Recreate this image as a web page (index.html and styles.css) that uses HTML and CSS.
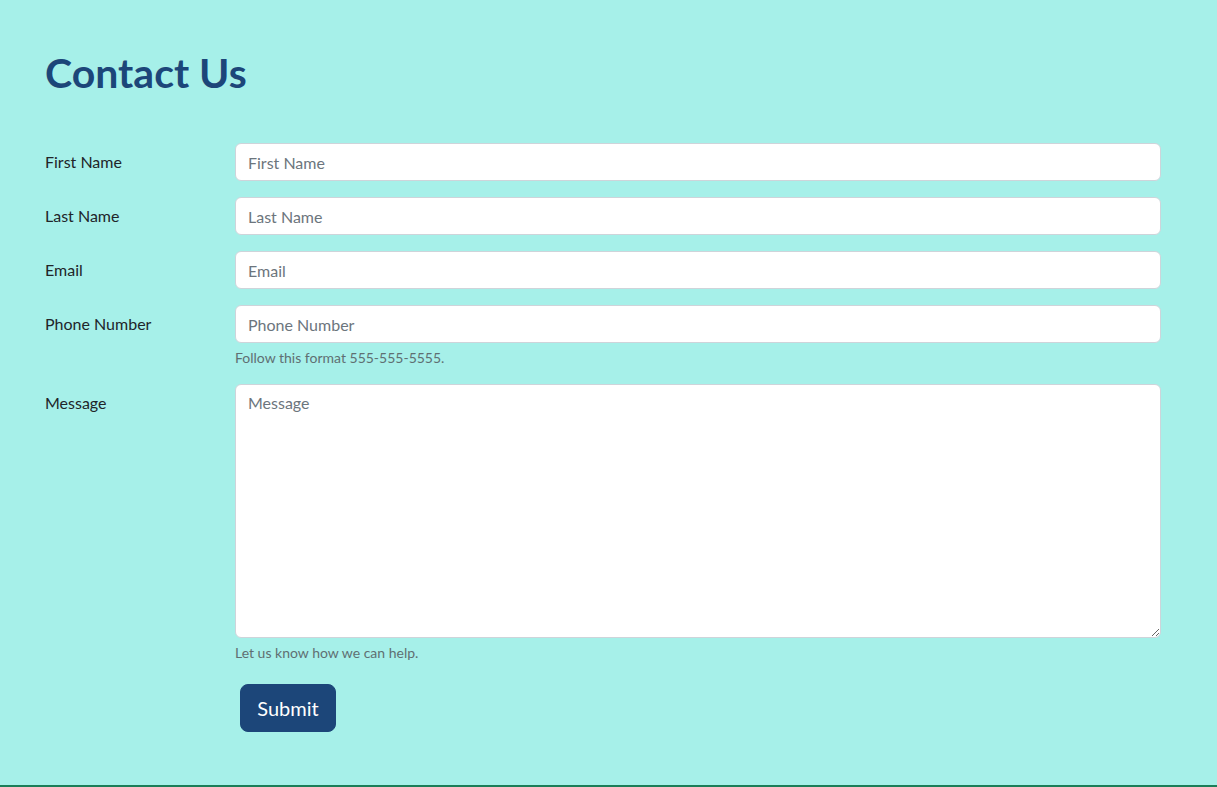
FILE: index.html
```html
<!DOCTYPE html>
<html lang="en">
<head>
<meta charset="utf-8">
<title>Contact Us</title>
<link rel="stylesheet" href="styles.css">
</head>
<body>
<main class="page">
  <h1 class="title">Contact Us</h1>
  <form class="form">
    <div class="row">
      <label class="label" for="fn">First Name</label>
      <div class="field"><input class="input" id="fn" type="text" placeholder="First Name"></div>
    </div>
    <div class="row">
      <label class="label" for="ln">Last Name</label>
      <div class="field"><input class="input" id="ln" type="text" placeholder="Last Name"></div>
    </div>
    <div class="row">
      <label class="label" for="em">Email</label>
      <div class="field"><input class="input" id="em" type="email" placeholder="Email"></div>
    </div>
    <div class="row">
      <label class="label" for="ph">Phone Number</label>
      <div class="field">
        <input class="input" id="ph" type="tel" placeholder="Phone Number">
        <div class="help">Follow this format 555-555-5555.</div>
      </div>
    </div>
    <div class="row">
      <label class="label" for="msg">Message</label>
      <div class="field">
        <textarea class="input textarea" id="msg" placeholder="Message"></textarea>
        <div class="help">Let us know how we can help.</div>
      </div>
    </div>
    <div class="row">
      <div></div>
      <div class="field"><button class="submit" type="button">Submit</button></div>
    </div>
  </form>
</main>
</body>
</html>
```

FILE: styles.css
```css
* { box-sizing: border-box; }
html, body { margin: 0; padding: 0; }
body {
  background: #a6f0e9;
  font-family: "Lato", "Open Sans", sans-serif;
  color: #212529;
  font-size: 16px;
  line-height: 1.5;
  min-height: 787px;
  border-bottom: 2px solid #1b7d58;
}
.page {
  padding: 49px 56px 0 45px;
}
.title {
  margin: 0 0 46px;
  font-size: 41px;
  line-height: 48px;
  font-weight: 700;
  color: #1c4679;
}
.form { display: flex; flex-direction: column; }
.row {
  display: grid;
  grid-template-columns: 190px 1fr;
  margin-bottom: 16px;
}
.label {
  padding-top: 7px;
  padding-bottom: 7px;
  font-size: 16px;
  line-height: 24px;
}
.field { display: flex; flex-direction: column; align-items: flex-start; }
.input {
  width: 100%;
  height: 38px;
  padding: 6px 12px;
  font-family: inherit;
  font-size: 16px;
  line-height: 24px;
  color: #212529;
  background: #fff;
  border: 1px solid #ced4da;
  border-radius: 6px;
}
.input::placeholder { color: #6c757d; opacity: 1; }
.textarea { height: 254px; resize: vertical; display: block; }
.help {
  margin-top: 4px;
  font-size: 14px;
  line-height: 21px;
  color: #5f6f72;
}
.submit {
  margin: 5px 0 0 5px;
  width: 96px;
  height: 48px;
  padding: 8px 16px;
  font-family: inherit;
  font-size: 20px;
  line-height: 30px;
  color: #fff;
  background: #1c4679;
  border: 1px solid #1c4679;
  border-radius: 8px;
}
```
